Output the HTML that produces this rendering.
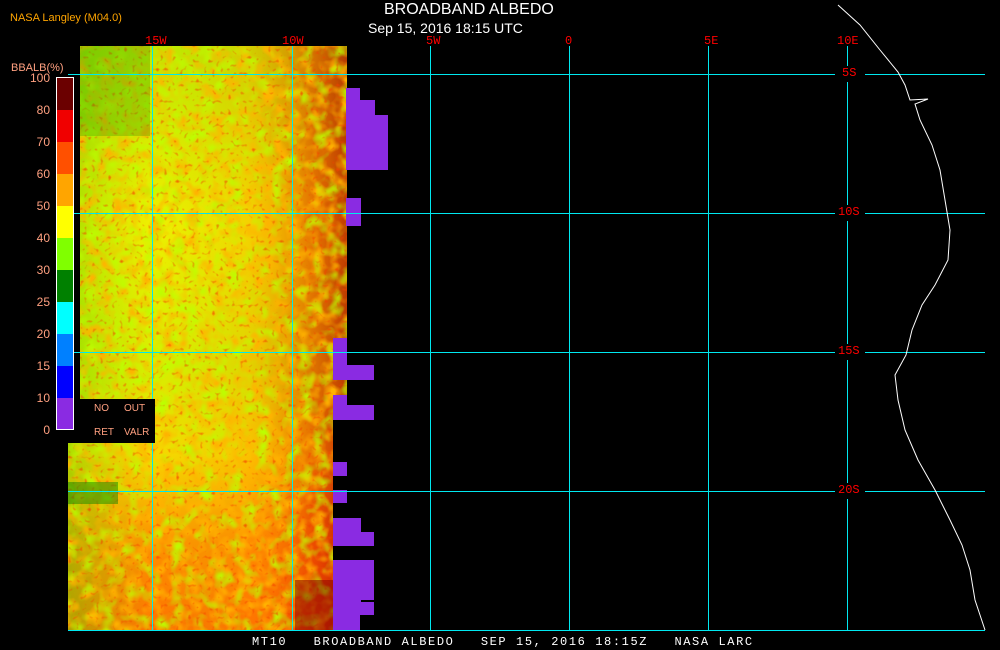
<!DOCTYPE html>
<html><head><style>
body{margin:0;background:#000;width:1000px;height:650px;overflow:hidden;position:relative;font-family:"Liberation Sans",sans-serif}
.t{position:absolute;white-space:pre}
</style></head><body>
<svg width="1000" height="650" style="position:absolute;left:0;top:0">
<defs>
<clipPath id="c"><path d="M80 46H347V400H333V630H68V400H80Z"/></clipPath>
<linearGradient id="gv" x1="0" y1="0" x2="0" y2="1">
<stop offset="0" stop-color="#c0e800"/><stop offset="0.3" stop-color="#f0ee00"/><stop offset="0.55" stop-color="#d8ee00"/><stop offset="0.7" stop-color="#f8d800"/><stop offset="0.85" stop-color="#ff9000"/><stop offset="1" stop-color="#ff7000"/>
</linearGradient>
<linearGradient id="gh" x1="0" y1="0" x2="1" y2="0">
<stop offset="0" stop-color="#60d000" stop-opacity="0.5"/><stop offset="0.3" stop-color="#a0e000" stop-opacity="0"/><stop offset="0.65" stop-color="#ff8000" stop-opacity="0.25"/><stop offset="0.88" stop-color="#e02000" stop-opacity="0.6"/><stop offset="1" stop-color="#b00000" stop-opacity="0.75"/>
</linearGradient>
<filter id="n" x="0" y="0" width="100%" height="100%">
<feTurbulence type="fractalNoise" baseFrequency="0.08" numOctaves="2" seed="3"/>
<feColorMatrix type="matrix" values="0 0 0 0 1  0 0 0 0 0.45  0 0 0 0 0  2.5 0 0 0 -1.05"/>
</filter>
<filter id="n2" x="0" y="0" width="100%" height="100%">
<feTurbulence type="fractalNoise" baseFrequency="0.07" numOctaves="2" seed="9"/>
<feColorMatrix type="matrix" values="0 0 0 0 0.5  0 0 0 0 1  0 0 0 0 0  2.5 0 0 0 -1.2"/>
</filter>
<filter id="n3" x="0" y="0" width="100%" height="100%">
<feTurbulence type="fractalNoise" baseFrequency="0.25" numOctaves="1" seed="5"/>
<feColorMatrix type="matrix" values="0 0 0 0 0.9  0 0 0 0 0.05  0 0 0 0 0  3 0 0 0 -1.8"/>
</filter>
</defs>
<g clip-path="url(#c)">
<rect x="68" y="46" width="279" height="584" fill="url(#gv)"/>
<rect x="68" y="46" width="279" height="584" fill="url(#gh)"/>
<rect x="68" y="46" width="279" height="584" filter="url(#n)"/>
<rect x="68" y="46" width="279" height="584" filter="url(#n2)"/>
<rect x="68" y="46" width="279" height="584" filter="url(#n3)"/>
<rect x="80" y="46" width="70" height="90" fill="#2a9a00" opacity="0.3"/>
<rect x="68" y="482" width="50" height="22" fill="#008000" opacity="0.45"/>
<rect x="295" y="580" width="38" height="50" fill="#800000" opacity="0.5"/>
</g>
<g fill="#8a2be2">
<path d="M346 88H360V100H375V115H388V143H375V143H388V170H346Z"/>
<rect x="346" y="198" width="15" height="28"/>
<path d="M333 338H347V365H374V380H333Z"/>
<path d="M333 395H347V405H374V420H333Z"/>
<rect x="333" y="462" width="14" height="14"/>
<rect x="333" y="490" width="14" height="13"/>
<path d="M333 518H361V532H374V546H333Z"/>
<path d="M333 560H374V600H361V602H374V615H360V630H333Z"/>
</g>
<g stroke="#00e8f0" stroke-width="1" fill="none">
<path d="M152.5 46V630M292.5 46V630M430.5 46V630M569.5 46V630M708.5 46V630M847.5 46V630"/>
<path d="M68 74.5H835M865 74.5H985M68 213.5H835M865 213.5H985M68 352.5H835M865 352.5H985M68 491.5H835M865 491.5H985M68 630.5H985"/>
</g>
<rect x="835" y="66" width="30" height="16" fill="#000"/><rect x="835" y="205" width="30" height="16" fill="#000"/><rect x="835" y="344" width="30" height="16" fill="#000"/><rect x="835" y="483" width="30" height="16" fill="#000"/>
<polyline fill="none" stroke="#fff" stroke-width="1" points="838,5 860,25 880,50 898,72 905,85 910,100 928,99 915,104 920,120 932,145 940,170 945,200 950,230 948,260 935,285 922,305 912,330 906,355 895,375 898,400 905,430 918,460 935,490 950,520 962,545 970,570 975,600 985,630"/>
<rect x="67" y="399" width="88" height="44" fill="#000"/>
<g>
<rect x="56" y="77" width="18" height="353" fill="#fff"/>
<rect x="57" y="78" width="16" height="32" fill="#6b0000"/>
<rect x="57" y="110" width="16" height="32" fill="#f00000"/>
<rect x="57" y="142" width="16" height="32" fill="#ff5000"/>
<rect x="57" y="174" width="16" height="32" fill="#ffa500"/>
<rect x="57" y="206" width="16" height="32" fill="#ffff00"/>
<rect x="57" y="238" width="16" height="32" fill="#80ff00"/>
<rect x="57" y="270" width="16" height="32" fill="#008000"/>
<rect x="57" y="302" width="16" height="32" fill="#00ffff"/>
<rect x="57" y="334" width="16" height="32" fill="#0080ff"/>
<rect x="57" y="366" width="16" height="32" fill="#0000ff"/>
<rect x="57" y="398" width="16" height="31" fill="#8a2be2"/>
</g>
</svg>
<div class="t" style="left:10px;top:12px;font-size:11px;color:#ffa500">NASA Langley (M04.0)</div>
<div class="t" style="left:384px;top:1px;font-size:16px;color:#fff">BROADBAND ALBEDO</div>
<div class="t" style="left:368px;top:20px;font-size:14px;color:#fff">Sep 15, 2016 18:15 UTC</div>
<div class="t" style="left:145px;top:34px;font-size:12px;color:#f00;font-family:'Liberation Mono',monospace">15W</div>
<div class="t" style="left:282px;top:34px;font-size:12px;color:#f00;font-family:'Liberation Mono',monospace">10W</div>
<div class="t" style="left:426px;top:34px;font-size:12px;color:#f00;font-family:'Liberation Mono',monospace">5W</div>
<div class="t" style="left:565px;top:34px;font-size:12px;color:#f00;font-family:'Liberation Mono',monospace">0</div>
<div class="t" style="left:704px;top:34px;font-size:12px;color:#f00;font-family:'Liberation Mono',monospace">5E</div>
<div class="t" style="left:837px;top:34px;font-size:12px;color:#f00;font-family:'Liberation Mono',monospace">10E</div>
<div class="t" style="left:842px;top:66px;font-size:12px;color:#f00;font-family:'Liberation Mono',monospace">5S</div>
<div class="t" style="left:838px;top:205px;font-size:12px;color:#f00;font-family:'Liberation Mono',monospace">10S</div>
<div class="t" style="left:838px;top:344px;font-size:12px;color:#f00;font-family:'Liberation Mono',monospace">15S</div>
<div class="t" style="left:838px;top:483px;font-size:12px;color:#f00;font-family:'Liberation Mono',monospace">20S</div>
<div class="t" style="left:11px;top:62px;font-size:11px;color:#ffa080">BBALB(%)</div>
<div style="position:absolute;left:0;top:70px;width:50px;font-size:12px;color:#ffa080;text-align:right;line-height:16px">
<div style="position:absolute;right:0;top:0">100</div><div style="position:absolute;right:0;top:32px">80</div><div style="position:absolute;right:0;top:64px">70</div><div style="position:absolute;right:0;top:96px">60</div><div style="position:absolute;right:0;top:128px">50</div><div style="position:absolute;right:0;top:160px">40</div><div style="position:absolute;right:0;top:192px">30</div><div style="position:absolute;right:0;top:224px">25</div><div style="position:absolute;right:0;top:256px">20</div><div style="position:absolute;right:0;top:288px">15</div><div style="position:absolute;right:0;top:320px">10</div><div style="position:absolute;right:0;top:352px">0</div>
</div>
<div class="t" style="left:94px;top:403px;font-size:10px;color:#ffa080">NO</div>
<div class="t" style="left:124px;top:403px;font-size:10px;color:#ffa080">OUT</div>
<div class="t" style="left:94px;top:427px;font-size:10px;color:#ffa080">RET</div>
<div class="t" style="left:124px;top:427px;font-size:10px;color:#ffa080">VALR</div>
<div class="t" style="left:252px;top:635px;font-size:12px;color:#fff;font-family:'Liberation Mono',monospace;letter-spacing:1.6px">MT10   BROADBAND ALBEDO   SEP 15, 2016 18:15Z   NASA LARC</div>
</body></html>
